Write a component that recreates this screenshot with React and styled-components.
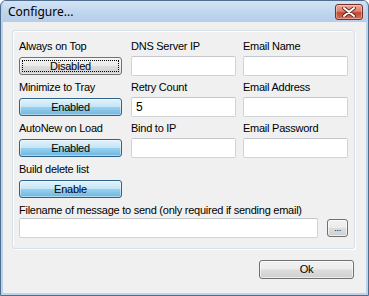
import React from 'react';
import styled, { createGlobalStyle } from 'styled-components';

const GlobalStyle = createGlobalStyle`
  html, body {
    margin: 0;
    padding: 0;
    background: #ffffff;
  }
  * {
    box-sizing: border-box;
  }
`;

const StyledWindow = styled.div`
  width: 369px;
  height: 296px;
  display: flex;
  flex-direction: column;
  border: 1px solid #4f6d8f;
  border-radius: 6px 6px 0 0;
  background: #bcd3ec;
  padding: 0 2px 2px 2px;
  font-family: 'Liberation Sans', Arial, sans-serif;
  font-size: 11px;
  letter-spacing: -0.25px;
  color: #000000;
  overflow: hidden;
`;

const StyledTitleBar = styled.div`
  height: 21px;
  flex: none;
  display: flex;
  align-items: center;
  justify-content: space-between;
  padding: 0 3px 0 5px;
  background: linear-gradient(to bottom, #d3e3f5 0%, #bed5ee 60%, #b5cde9 100%);
`;

const StyledTitle = styled.span`
  font-family: 'Noto Sans', 'Open Sans', sans-serif;
  font-size: 12px;
  line-height: 16px;
  letter-spacing: 0;
`;

const StyledCloseButton = styled.div`
  width: 28px;
  height: 16px;
  display: flex;
  align-items: center;
  justify-content: center;
  border: 1px solid #7a2d23;
  border-radius: 3px;
  background: linear-gradient(
    to bottom,
    #eaa99b 0%,
    #d9826f 45%,
    #c2472f 55%,
    #d8705a 100%
  );
  box-shadow: inset 0 0 0 1px rgba(255, 255, 255, 0.35);
`;

const StyledClient = styled.div`
  flex: 1;
  display: flex;
  flex-direction: column;
  background: #f0f0f0;
  padding: 8px 11px 0 9px;
`;

const StyledGroup = styled.div`
  border: 1px solid #d5dfe5;
  border-radius: 3px;
  box-shadow: inset 1px 1px 0 #ffffff, 1px 1px 0 #ffffff;
  padding: 9px 6px 10px 6px;
  display: flex;
  flex-direction: column;
`;

const StyledGrid = styled.div`
  display: grid;
  grid-template-columns: 112px 112px 105px;
  grid-auto-rows: 41px;
`;

const StyledField = styled.div`
  display: flex;
  flex-direction: column;
  gap: 3px;
`;

const StyledLabel = styled.span`
  line-height: 13px;
  white-space: nowrap;
`;

const StyledControlCell = styled.div`
  height: 20px;
  display: flex;
  align-items: center;
`;

const StyledTextBox = styled.div`
  width: ${(props) => props.width || 105}px;
  height: 20px;
  background: #ffffff;
  border: 1px solid #d0d3d8;
  border-top-color: #c3c6cb;
  border-radius: 2px;
  padding: 2px 4px;
  font-size: 12px;
  line-height: 14px;
  letter-spacing: 0;
`;

const StyledToggle = styled.div`
  width: 103px;
  height: 18px;
  display: flex;
  align-items: center;
  justify-content: center;
  border: 1px solid ${(props) => (props.active ? '#2c628b' : '#707070')};
  border-radius: 3px;
  background: ${(props) =>
    props.active
      ? 'linear-gradient(to bottom, #e3f3fc 0%, #c4e5f6 48%, #98d1ef 52%, #6db6de 100%)'
      : 'linear-gradient(to bottom, #f2f2f2 0%, #ebebeb 48%, #dddddd 52%, #cfcfcf 100%)'};
  box-shadow: inset 0 0 0 1px rgba(255, 255, 255, 0.45);
  position: relative;
  line-height: 13px;
`;

const StyledFocusRing = styled.span`
  position: absolute;
  inset: 2px;
  border: 1px dotted #000000;
`;

const StyledFileRow = styled.div`
  display: flex;
  flex-direction: column;
  gap: 1px;
`;

const StyledFileInputs = styled.div`
  display: flex;
  align-items: center;
  gap: 9px;
`;

const StyledPushButton = styled.div`
  width: ${(props) => props.width}px;
  height: ${(props) => props.height}px;
  display: flex;
  align-items: center;
  justify-content: center;
  border: 1px solid #707070;
  border-radius: 3px;
  background: linear-gradient(to bottom, #f2f2f2 0%, #ebebeb 48%, #dddddd 52%, #cfcfcf 100%);
  box-shadow: inset 0 0 0 1px rgba(255, 255, 255, 0.6);
  font-size: ${(props) => props.fontSize || 11}px;
  line-height: 13px;
`;

const StyledFooter = styled.div`
  display: flex;
  justify-content: flex-end;
  padding: 11px 1px 0 0;
`;

const CloseGlyph = () => (
  <svg width='14' height='10' viewBox='0 0 14 10'>
    <path
      d='M2 1 L12 9 M12 1 L2 9'
      stroke='#5a1d14'
      strokeWidth='3.6'
      strokeLinecap='round'
    />
    <path
      d='M2 1 L12 9 M12 1 L2 9'
      stroke='#ffffff'
      strokeWidth='2'
      strokeLinecap='round'
    />
  </svg>
);

const Toggle = ({ label, value, active, focused }) => (
  <StyledField>
    <StyledLabel>{label}</StyledLabel>
    <StyledControlCell>
      <StyledToggle active={active}>
        {focused && <StyledFocusRing />}
        {value}
      </StyledToggle>
    </StyledControlCell>
  </StyledField>
);

const TextField = ({ label, value }) => (
  <StyledField>
    <StyledLabel>{label}</StyledLabel>
    <StyledControlCell>
      <StyledTextBox>{value}</StyledTextBox>
    </StyledControlCell>
  </StyledField>
);

export default function App() {
  return (
    <>
      <GlobalStyle />
      <StyledWindow>
        <StyledTitleBar>
          <StyledTitle>Configure...</StyledTitle>
          <StyledCloseButton>
            <CloseGlyph />
          </StyledCloseButton>
        </StyledTitleBar>

        <StyledClient>
          <StyledGroup>
            <StyledGrid>
              <Toggle label='Always on Top' value='Disabled' focused />
              <TextField label='DNS Server IP' />
              <TextField label='Email Name' />

              <Toggle label='Minimize to Tray' value='Enabled' active />
              <TextField label='Retry Count' value='5' />
              <TextField label='Email Address' />

              <Toggle label='AutoNew on Load' value='Enabled' active />
              <TextField label='Bind to IP' />
              <TextField label='Email Password' />

              <Toggle label='Build delete list' value='Enable' active />
            </StyledGrid>

            <StyledFileRow>
              <StyledLabel>
                Filename of message to send (only required if sending email)
              </StyledLabel>
              <StyledFileInputs>
                <StyledTextBox width={300} />
                <StyledPushButton width={21} height={18} fontSize={9}>
                  ...
                </StyledPushButton>
              </StyledFileInputs>
            </StyledFileRow>
          </StyledGroup>

          <StyledFooter>
            <StyledPushButton width={95} height={19}>
              Ok
            </StyledPushButton>
          </StyledFooter>
        </StyledClient>
      </StyledWindow>
    </>
  );
}
